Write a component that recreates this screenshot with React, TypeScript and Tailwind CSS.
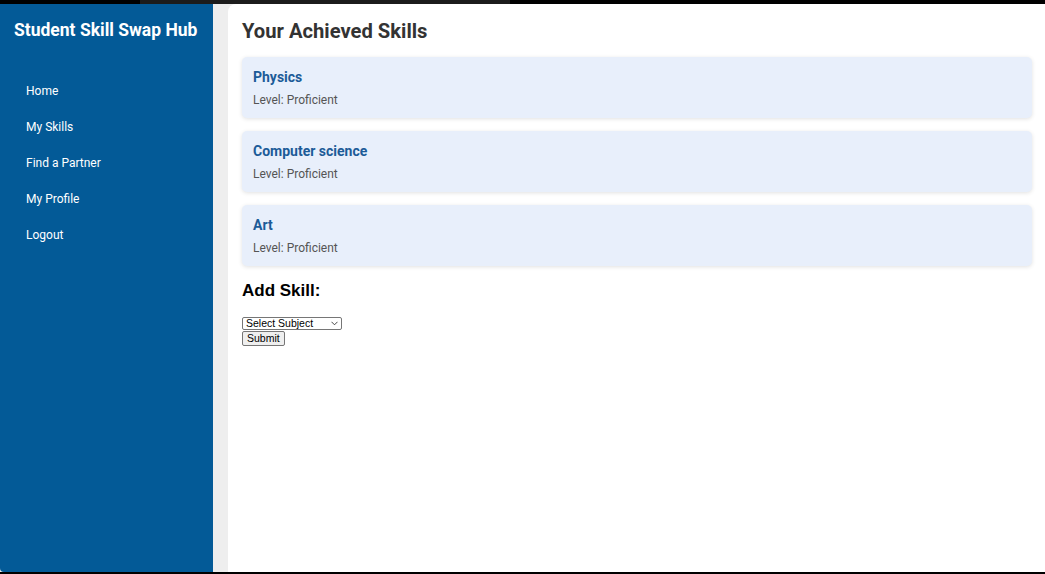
import React from "react";

const navItems = ["Home", "My Skills", "Find a Partner", "My Profile", "Logout"];
const skills = ["Physics", "Computer science", "Art"];

export default function App() {
  return (
    <div className="w-[1045px] h-[574px] flex flex-col bg-black overflow-hidden font-['Roboto',sans-serif]">
      {/* top edge */}
      <div className="h-[4px] flex">
        <div className="w-[140px] bg-black"></div>
        <div className="w-[370px] bg-[#1c1c1c]"></div>
        <div className="flex-1 bg-black"></div>
      </div>

      <div className="flex h-[568px] bg-[#eeeeee]">
        {/* Sidebar */}
        <aside className="w-[213px] bg-[#035a97] text-white rounded-bl-[4px] flex flex-col">
          <h1 className="text-[17.5px] font-bold leading-[22px] pl-[14px] pt-[15px]">Student Skill Swap Hub</h1>
          <nav className="flex flex-col pt-[42px] pl-[26px]">
            {navItems.map((item) => (
              <a key={item} href="#" className="text-[12px] leading-[16px] h-[36px]">
                {item}
              </a>
            ))}
          </nav>
        </aside>

        <div className="w-[15px]"></div>

        {/* Main */}
        <main className="flex-1 bg-white rounded-tl-[8px] pl-[14px] pr-[13px] pt-[14px]">
          <h2 className="text-[20.2px] font-bold leading-[26px] text-[#333333]">Your Achieved Skills</h2>
          <div className="flex flex-col gap-[13px] mt-[13px]">
            {skills.map((s) => (
              <div key={s} className="h-[61px] bg-[#e8effb] rounded-[5px] shadow-[0_1px_4px_rgba(0,0,0,0.12)] px-[11px] pt-[11px]">
                <h3 className="text-[14px] font-bold leading-[18px] text-[#1c5b98]">{s}</h3>
                <p className="text-[12px] leading-[16px] text-[#555555] mt-[6px]">Level: Proficient</p>
              </div>
            ))}
          </div>
          <div className="font-['Liberation_Sans',Arial,sans-serif] text-black">
            <h3 className="text-[17px] font-bold leading-[22px] mt-[14px]">Add Skill:</h3>
            <form className="flex flex-col items-start mt-[15px]">
              <div className="relative w-[100px] h-[13px]">
                <select className="block w-full h-full appearance-none py-0 pl-[3px] pr-[14px] text-[10.5px] leading-[11px] border border-[#767676] rounded-[2px] bg-white">
                  <option>Select Subject</option>
                </select>
                <svg className="absolute right-[4px] top-[4px] pointer-events-none" width="7" height="5" viewBox="0 0 7 5" fill="none">
                  <path d="M0.5 0.8 L3.5 3.8 L6.5 0.8" stroke="#333" strokeWidth="0.9" />
                </svg>
              </div>
              <button type="button" className="h-[15px] mt-[1px] px-[4px] py-0 text-[10.5px] leading-[11px] border border-[#767676] rounded-[2px] bg-[#efefef]">
                Submit
              </button>
            </form>
          </div>
        </main>
      </div>

      <div className="h-[2px] bg-black"></div>
    </div>
  );
}
